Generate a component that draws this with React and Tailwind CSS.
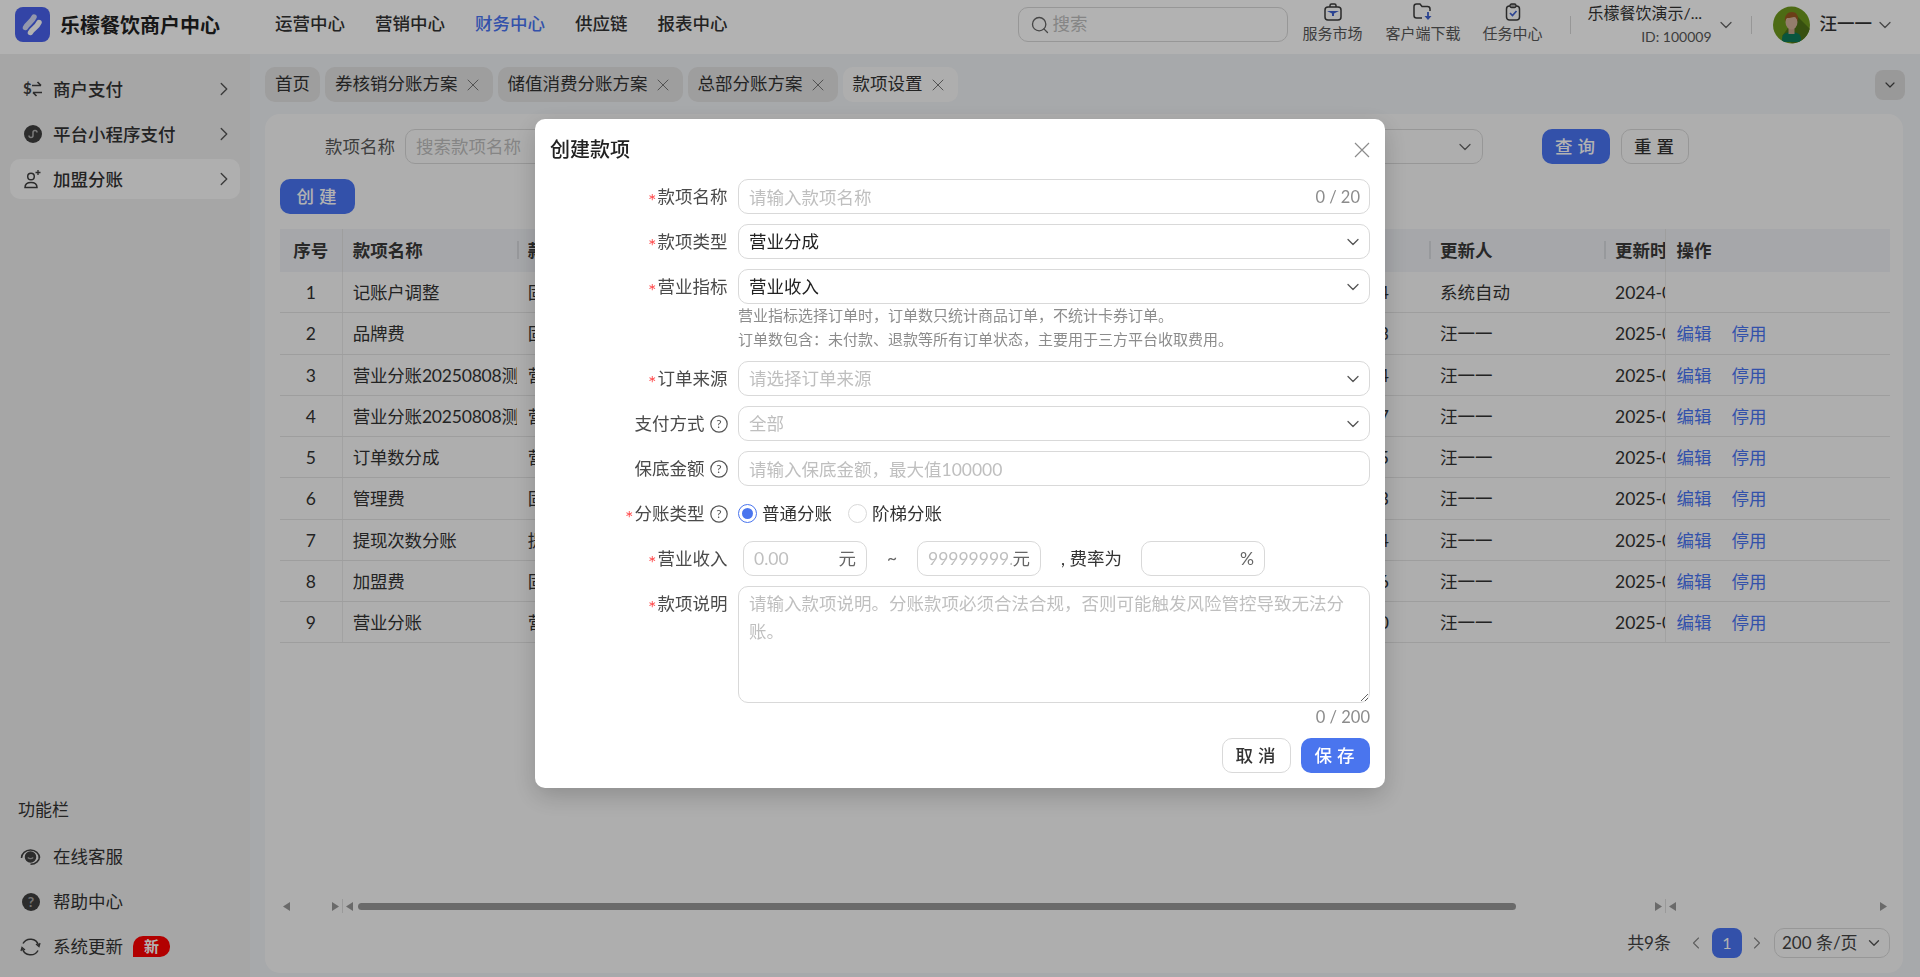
import { ChevronDown, ChevronRight, ChevronLeft, X, Search } from 'lucide-react';

const NAV = ['运营中心', '营销中心', '财务中心', '供应链', '报表中心'];
const TABS = ['券核销分账方案', '储值消费分账方案', '总部分账方案', '款项设置'];
const ROWS = [
  ['记账户调整', '固定金额', '2024-07-01 10:20:14', '系统自动', '2024-07-01 10:20:14', false],
  ['品牌费', '固定金额', '2025-06-12 14:10:03', '汪一一', '2025-06-12 14:10:03', true],
  ['营业分账20250808测试', '营业分成', '2025-08-08 11:02:14', '汪一一', '2025-08-08 11:02:14', true],
  ['营业分账20250808测试', '营业分成', '2025-08-08 11:01:07', '汪一一', '2025-08-08 11:01:07', true],
  ['订单数分成', '营业分成', '2025-07-21 16:32:45', '汪一一', '2025-07-21 16:32:45', true],
  ['管理费', '固定金额', '2025-07-21 16:31:13', '汪一一', '2025-07-21 16:31:13', true],
  ['提现次数分账', '提现分成', '2025-07-18 09:40:24', '汪一一', '2025-07-18 09:40:24', true],
  ['加盟费', '固定金额', '2025-07-18 09:38:16', '汪一一', '2025-07-18 09:38:16', true],
  ['营业分账', '营业分成', '2025-07-18 09:36:50', '汪一一', '2025-07-18 09:36:50', true],
];

function Logo() {
  return (
    <svg width="35" height="35" viewBox="0 0 35 35" fill="none" strokeLinecap="round">
      <rect width="35" height="35" rx="8" fill="#4a62ee" />
      <path d="M10.500 20.500C12 17 17 15 19 10" stroke="#d3d9f7" strokeWidth="5.500" />
      <path d="M15.500 25.500C17 22 22 20.500 24 15.500" stroke="#ffffff" strokeWidth="5.500" />
    </svg>
  );
}

function SwapIcon() {
  return (
    <svg width="20" height="18" viewBox="0 0 20 18" fill="none" stroke="#404040" strokeWidth="1.700">
      <text x="0" y="14" fontSize="15" fontWeight="700" fill="#404040" stroke="none" fontFamily="Lato">$</text>
      <path d="M9 5.500h9M14.500 2l3.500 3.500M19 12.500h-9M13.500 16L10 12.500" />
    </svg>
  );
}

function MiniIcon() {
  return (
    <svg width="18" height="18" viewBox="0 0 18 18" fill="none">
      <circle cx="9" cy="9" r="9" fill="#404040" />
      <path d="M5 10.500a2 2 0 1 0 4 0v-3a2 2 0 1 1 4 0" stroke="#b0b0b0" strokeWidth="1.500" />
    </svg>
  );
}

function UserPlusIcon() {
  return (
    <svg width="20" height="20" viewBox="0 0 20 20" fill="none" stroke="#404040" strokeWidth="1.500">
      <circle cx="8" cy="7.500" r="3.300" />
      <path d="M2 18.500c0-3.500 2.500-5 6-5s6 1.500 6 5z" />
      <path d="M15 1v5M12.500 3.500h5" strokeWidth="1.300" />
    </svg>
  );
}

function ServiceIcon() {
  return (
    <svg width="21" height="20" viewBox="0 0 21 20" fill="none" stroke="#404040" strokeWidth="1.500">
      <path d="M1.500 11a9 8 0 0 1 18 0" />
      <path d="M19.500 9.500c0 4-3.500 7.800-9 7.800" />
      <circle cx="10.500" cy="10" r="5" fill="#404040" />
      <path d="M7.800 10.500c1.500 1.500 4 1.500 5.400 0" stroke="#a5a5a5" strokeWidth="1.200" />
    </svg>
  );
}

function HelpIcon() {
  return (
    <svg width="18" height="18" viewBox="0 0 18 18">
      <circle cx="9" cy="9" r="9" fill="#404040" />
      <text x="9" y="14" fontSize="14" fontWeight="700" fill="#a5a5a5" textAnchor="middle" fontFamily="Lato">?</text>
    </svg>
  );
}

function RefreshIcon() {
  return (
    <svg width="21" height="20" viewBox="0 0 21 20" fill="none" stroke="#404040" strokeWidth="1.500">
      <path d="M3 6.500A8.500 8.500 0 0 1 18.500 8" />
      <path d="M18 13.500A8.500 8.500 0 0 1 2.500 12" />
      <path d="M16 7l3 2.500 1-3.500M5 13l-3-2.500L1 14" strokeWidth="1.300" />
    </svg>
  );
}

function BagIcon() {
  return (
    <svg width="20" height="18" viewBox="0 0 20 18" fill="none">
      <rect x="2" y="4" width="16" height="13" rx="3" stroke="#3d3d3d" strokeWidth="1.500" />
      <path d="M7 4V2.500Q7 1 8.500 1h3Q13 1 13 2.500V4" stroke="#3d3d3d" strokeWidth="1.500" />
      <path d="M4 8h12L11 10.500V13H9v-2.500z" fill="#3f62d0" />
    </svg>
  );
}

function FolderIcon() {
  return (
    <svg width="20" height="18" viewBox="0 0 20 18" fill="none">
      <path d="M9 15H3.500Q1 15 1 12.500V3.500Q1 1 3.500 1H7l2 2.500h5.500Q17 3.500 17 6v2" stroke="#3d3d3d" strokeWidth="1.500" />
      <path d="M15 9v5" stroke="#3f62d0" strokeWidth="1.800" />
      <path d="M11.500 13h7L15 17z" fill="#3f62d0" />
    </svg>
  );
}

function TaskIcon() {
  return (
    <svg width="20" height="18" viewBox="0 0 20 18" fill="none">
      <rect x="3.500" y="3" width="13" height="14" rx="3" stroke="#3d3d3d" strokeWidth="1.500" />
      <rect x="7" y="1" width="6" height="3.500" rx="1.500" fill="#b0b0b0" stroke="#3d3d3d" strokeWidth="1.300" />
      <path d="M7 10l2.500 2.500L13.500 8" stroke="#3f62d0" strokeWidth="1.700" />
    </svg>
  );
}

function Avatar() {
  return (
    <svg width="37" height="38" viewBox="0 0 37 38" className="shrink-0">
      <clipPath id="av"><circle cx="18.500" cy="19" r="18.500" /></clipPath>
      <circle cx="18.500" cy="19" r="18.500" fill="#6f9a1e" />
      <g clipPath="url(#av)">
        <path d="M24 10L38 24V38H20L9 30z" fill="#4f7318" />
        <path d="M9 33c0-5 4-7 9.500-7s9.500 2 9.500 7v3H9z" fill="#0f7a5a" />
        <rect x="15.500" y="20" width="6" height="8" fill="#c9a58c" />
        <ellipse cx="18.500" cy="16" rx="6" ry="7.500" fill="#d4b39b" />
        <path d="M12 16c-1-7 3-10 7-10 4 0 7 3 6 10-1-3-2-5-4-5-3 1-7 1-7 1-1 1-2 2-2 4z" fill="#9a5a22" />
      </g>
    </svg>
  );
}

function Help() {
  return (
    <svg width="18" height="18" viewBox="0 0 18 18" className="shrink-0">
      <circle cx="9" cy="9" r="8.200" fill="none" stroke="#555" strokeWidth="1.200" />
      <text x="9" y="13.200" fontSize="12" fill="#555" textAnchor="middle" fontFamily="Lato">?</text>
    </svg>
  );
}

function TopTool({ icon, label }) {
  return (
    <div className="flex flex-col items-center pt-[3px] text-[15px] leading-[22px] text-[#595959]">
      <div className="h-[18px]">{icon}</div>
      <span className="mt-px">{label}</span>
    </div>
  );
}

function Header() {
  return (
    <header className="h-[54px] shrink-0 bg-white flex items-center pb-[5px] text-[#333]">
      <div className="ml-[15px]"><Logo /></div>
      <div className="ml-[10px] w-[215px] text-[20px] font-bold text-[#222]">乐檬餐饮商户中心</div>
      <nav className="flex gap-[30px] text-[17.5px] font-medium">
        {NAV.map((n) => (
          <span key={n} className={n === '财务中心' ? 'text-[#4975f4]' : 'text-[#333]'}>{n}</span>
        ))}
      </nav>
      <div className="ml-[290px] w-[270px] h-[35px] border border-[#d9d9d9] rounded-[10px] flex items-center pl-[11px] text-[17.5px] text-[#bfbfbf]">
        <Search size={20} strokeWidth={1.600} className="text-[#666]" />
        <span className="ml-[3px]">搜索</span>
      </div>
      <div className="ml-[15px] w-[60px] flex justify-center self-start"><TopTool icon={<BagIcon />} label="服务市场" /></div>
      <div className="ml-[23px] w-[75px] flex justify-center self-start"><TopTool icon={<FolderIcon />} label="客户端下载" /></div>
      <div className="ml-[22px] w-[60px] flex justify-center self-start"><TopTool icon={<TaskIcon />} label="任务中心" /></div>
      <div className="ml-[27px] w-px h-[18px] bg-[#d9d9d9]" />
      <div className="ml-[17px] w-[124px] flex flex-col text-[14px] leading-[24px] text-[#595959]">
        <span className="whitespace-nowrap text-[16px] text-[#333]">乐檬餐饮演示/...</span>
        <span className="text-right">ID: 100009</span>
      </div>
      <ChevronDown size={20} strokeWidth={1.500} className="ml-[4px] text-[#666]" />
      <div className="ml-[15px] w-px h-[18px] bg-[#d9d9d9]" />
      <div className="ml-[21px]"><Avatar /></div>
      <span className="ml-[10px] text-[17.5px] font-medium text-[#333]">汪一一</span>
      <ChevronDown size={20} strokeWidth={1.500} className="ml-[3px] text-[#666]" />
    </header>
  );
}

function SideItem({ icon, label, active }) {
  return (
    <div className={`h-[40px] rounded-[10px] pl-[12px] pr-[5px] flex items-center text-[17.5px] font-medium text-[#333] ${active ? 'bg-[#fbfbfb]' : ''}`}>
      <span className="w-[21px] flex justify-center">{icon}</span>
      <span className="ml-[10px] flex-1 pt-[2px]">{label}</span>
      <ChevronRight size={22} strokeWidth={1.500} className="text-[#555]" />
    </div>
  );
}

function FootItem({ icon, label, children }) {
  return (
    <div className="h-[45px] pl-[20px] flex items-center text-[17.5px] text-[#333]">
      <span className="w-[21px] flex justify-center">{icon}</span>
      <span className="ml-[12px] pt-[2px]">{label}</span>
      {children}
    </div>
  );
}

function Sidebar() {
  return (
    <aside className="w-[250px] shrink-0 bg-[#eeeeee] flex flex-col justify-between">
      <div className="pt-[15px] px-[10px] flex flex-col gap-[5px]">
        <SideItem icon={<SwapIcon />} label="商户支付" />
        <SideItem icon={<MiniIcon />} label="平台小程序支付" />
        <SideItem icon={<UserPlusIcon />} label="加盟分账" active />
      </div>
      <div className="pb-[8px]">
        <div className="pl-[18px] mb-[12px] text-[17px] text-[#333]">功能栏</div>
        <FootItem icon={<ServiceIcon />} label="在线客服" />
        <FootItem icon={<HelpIcon />} label="帮助中心" />
        <FootItem icon={<RefreshIcon />} label="系统更新">
          <span className="ml-[10px] w-[37px] h-[21px] bg-[#ff0000] text-white text-[15px] font-bold leading-[21px] text-center rounded-t-[10px] rounded-br-[10px]">新</span>
        </FootItem>
      </div>
    </aside>
  );
}

function Tabs() {
  return (
    <div className="mt-[13px] mr-[15px] flex items-center justify-between">
      <div className="flex gap-[5px] text-[17.5px] text-[#333]">
        <div className="h-[35px] px-[10px] rounded-[10px] bg-[#e2e2e2] flex items-center">首页</div>
        {TABS.map((t) => (
          <div key={t} className={`h-[35px] pl-[10px] pr-[10px] rounded-[10px] flex items-center ${t === '款项设置' ? 'bg-[#fafafa]' : 'bg-[#e2e2e2]'}`}>
            {t}
            <X size={20} strokeWidth={1.200} className="ml-[5px] text-[#777]" />
          </div>
        ))}
      </div>
      <div className="w-[30px] h-[30px] rounded-[8px] bg-[#dcdcdc] flex items-center justify-center">
        <ChevronDown size={16} strokeWidth={1.800} className="text-[#444]" />
      </div>
    </div>
  );
}

const GRID = 'grid grid-cols-[62.700px_174px_912.300px_175px_61.500px_224.500px]';

function ResizeBar() {
  return <span className="absolute left-0 top-[12px] h-[18px] w-[2px] bg-[#d9dbe0]" />;
}

function Table() {
  return (
    <div className="mt-[15px] text-[17.5px] text-[#333]">
      <div className={`${GRID} h-[43px] bg-[#eef0f4] font-bold items-center text-[#3a3a3a]`}>
        <div className="h-full pt-[2px] flex items-center justify-center border-r border-[#e3e3e3]">序号</div>
        <div className="pl-[10px] pt-[2px]">款项名称</div>
        <div className="relative h-full flex items-center pl-[11px] pt-[2px]"><ResizeBar />款项类型</div>
        <div className="relative h-full flex items-center pl-[11px] pt-[2px]"><ResizeBar />更新人</div>
        <div className="relative h-full flex items-center pl-[11px] pt-[2px] overflow-hidden whitespace-nowrap"><ResizeBar />更新时间</div>
        <div className="h-full flex items-center pl-[10px] pt-[2px] border-l border-[#e3e3e3]">操作</div>
      </div>
      {ROWS.map((r, i) => (
        <div key={i} className={`${GRID} h-[41.250px] border-b border-[#e3e3e3] items-center`}>
          <div className="h-full pt-[2px] flex items-center justify-center border-r border-[#e8e8e8]">{i + 1}</div>
          <div className="pl-[10px] pt-[2px] tracking-[-0.2px] whitespace-nowrap overflow-hidden">{r[0]}</div>
          <div className="pl-[11px] pt-[2px] pr-[40px] flex justify-between whitespace-nowrap overflow-hidden">
            <span>{r[1]}</span>
            <span>{r[2]}</span>
          </div>
          <div className="pl-[11px] pt-[2px]">{r[3]}</div>
          <div className="pl-[11px] pt-[2px] whitespace-nowrap overflow-hidden">{r[4]}</div>
          <div className="h-full flex items-center pl-[10px] pt-[2px] gap-[20px] border-l border-[#e8e8e8] text-[#4975f4]">
            {r[5] && <span>编辑</span>}
            {r[5] && <span>停用</span>}
          </div>
        </div>
      ))}
    </div>
  );
}

function Arrow({ dir }) {
  return (
    <svg width="7" height="9" viewBox="0 0 7 9" className="shrink-0">
      <path d={dir === 'l' ? 'M7 0v9L0 4.500z' : 'M0 0v9l7-4.500z'} fill="#999" />
    </svg>
  );
}

function ScrollBars() {
  return (
    <div className="mt-auto h-[14px] flex items-center">
      <div className="w-[62px] h-full flex items-center justify-between px-[3px]">
        <Arrow dir="l" /><Arrow dir="r" />
      </div>
      <div className="w-px h-full bg-[#dddddd]" />
      <div className="flex-1 h-full flex items-center px-[3px]">
        <Arrow dir="l" />
        <div className="ml-[5px] w-[1158px] h-[7px] rounded-full bg-[#999999]" />
        <div className="flex-1" />
        <Arrow dir="r" />
      </div>
      <div className="w-px h-full bg-[#dddddd]" />
      <div className="w-[224px] h-full flex items-center justify-between px-[3px]">
        <Arrow dir="l" /><Arrow dir="r" />
      </div>
    </div>
  );
}

function Pager() {
  return (
    <div className="mt-[15px] h-[30px] flex items-center justify-end text-[17px] text-[#444]">
      <span>共9条</span>
      <ChevronLeft size={20} strokeWidth={1.300} className="ml-[15px] text-[#888]" />
      <span className="ml-[6px] w-[30px] h-[30px] rounded-[8px] bg-[#4975f4] text-white flex items-center justify-center text-[16px]">1</span>
      <ChevronRight size={20} strokeWidth={1.300} className="ml-[5px] text-[#888]" />
      <div className="ml-[7px] w-[116px] h-[30px] rounded-[10px] border border-[#d9d9d9] pl-[7px] flex items-center">
        200 条/页
        <ChevronDown size={18} strokeWidth={1.800} className="ml-auto mr-[6px] text-[#555]" />
      </div>
    </div>
  );
}

function MainCard() {
  return (
    <div className="mt-[12px] mr-[17px] mb-[4px] flex-1 rounded-[15px] bg-[#fafafa] pt-[15px] pb-[15px] pl-[15px] pr-[13px] flex flex-col">
      <div className="flex items-center h-[35px] pl-[45px] text-[17.5px] text-[#595959]">
        <span className="pt-[2px]">款项名称</span>
        <div className="ml-[10px] w-[400px] h-[35px] rounded-[10px] border border-[#d9d9d9] pl-[10px] pt-[2px] flex items-center text-[#bfbfbf]">搜索款项名称</div>
        <div className="ml-[278px] w-[400px] h-[35px] rounded-[10px] border border-[#d9d9d9] flex items-center justify-end pr-[7px]">
          <ChevronDown size={20} strokeWidth={1.500} className="text-[#666]" />
        </div>
        <button className="ml-[59px] w-[68px] h-[35px] pl-[3px] pt-[2px] rounded-[10px] bg-[#4975f4] font-medium text-white tracking-[5px]">查询</button>
        <button className="ml-[11px] w-[68px] h-[35px] pl-[3px] pt-[2px] rounded-[10px] border border-[#d9d9d9] font-medium text-[#333] tracking-[5px]">重置</button>
      </div>
      <button className="mt-[15px] w-[75px] h-[35px] pl-[3px] pt-[2px] rounded-[10px] bg-[#4975f4] text-white text-[17.5px] tracking-[5px] font-medium">创建</button>
      <Table />
      <ScrollBars />
      <Pager />
    </div>
  );
}

function Label({ star, help, children }) {
  return (
    <div className="w-[192.500px] shrink-0 pt-[2px] flex items-center justify-end text-[17.5px] text-[#4a4a4a]">
      {star && <span className="text-[#ff4d4f] text-[20px] leading-none mr-px translate-y-[2px]">*</span>}
      <span>{children}</span>
      {help && <span className="ml-[5px] -translate-y-[1px]"><Help /></span>}
    </div>
  );
}

function Field({ label, star, help, children, className = 'mb-[10px]' }) {
  return (
    <div className={`flex items-start ${className}`}>
      <div className="h-[35px] flex items-center"><Label star={star} help={help}>{label}</Label></div>
      <div className="ml-[10.500px] flex-1">{children}</div>
    </div>
  );
}

const INPUT = 'w-full h-[35px] rounded-[10px] border border-[#d9d9d9] px-[10px] pt-[2px] text-[17.5px] outline-none placeholder:text-[#bfbfbf]';

function Select({ value, placeholder }) {
  return (
    <div className="h-[35px] rounded-[10px] border border-[#d9d9d9] pl-[10px] pr-[6px] flex items-center justify-between text-[17.5px]">
      <span className={`pt-[2px] ${value ? 'text-[#222]' : 'text-[#bfbfbf]'}`}>{value || placeholder}</span>
      <ChevronDown size={20} strokeWidth={1.500} className="text-[#555]" />
    </div>
  );
}

function Radio({ checked, label }) {
  return (
    <div className="flex items-center text-[17.5px] text-[#333]">
      <span className={`w-[19px] h-[19px] rounded-full border flex items-center justify-center ${checked ? 'border-[#4a75ee]' : 'border-[#d9d9d9]'}`}>
        {checked && <span className="w-[11px] h-[11px] rounded-full bg-[#4a75ee]" />}
      </span>
      <span className="ml-[5px] pt-[2px]">{label}</span>
    </div>
  );
}

function Affix({ placeholder, suffix }) {
  return (
    <div className="w-[124px] h-[35px] pt-[2px] rounded-[10px] border border-[#d9d9d9] px-[10px] flex items-center justify-between text-[17.5px]">
      <span className="text-[#bfbfbf] overflow-hidden whitespace-nowrap">{placeholder}</span>
      <span className="shrink-0 text-[#666] ml-[1px]">{suffix}</span>
    </div>
  );
}

function Modal() {
  return (
    <div className="fixed inset-0 bg-black/30 flex justify-center pt-[119px]">
      <div className="relative w-[850px] h-[669px] rounded-[10px] bg-white pr-[15px] shadow-[0_8px_24px_rgba(0,0,0,0.2)]">
        <div className="h-[60px] pl-[15px] flex items-center text-[20px] font-medium text-[#222]">创建款项</div>
        <svg width="16" height="16" viewBox="0 0 16 16" className="absolute top-[23px] right-[15px]" fill="none" stroke="#8c8c8c" strokeWidth="1.200">
          <path d="M1 1l14 14M15 1L1 15" />
        </svg>
        <Field label="款项名称" star>
          <div className="relative">
            <input readOnly placeholder="请输入款项名称" className={INPUT} />
            <span className="absolute right-[10px] top-[6px] text-[16.500px] text-[#8c8c8c]">0 / 20</span>
          </div>
        </Field>
        <Field label="款项类型" star><Select value="营业分成" /></Field>
        <Field label="营业指标" star className="">
          <Select value="营业收入" />
          <div className="-mt-[1px] text-[15px] leading-[24px] text-[#8c8c8c] mb-[10px] whitespace-nowrap">
            <div>营业指标选择订单时，订单数只统计商品订单，不统计卡券订单。</div>
            <div>订单数包含：未付款、退款等所有订单状态，主要用于三方平台收取费用。</div>
          </div>
        </Field>
        <Field label="订单来源" star><Select placeholder="请选择订单来源" /></Field>
        <Field label="支付方式" help><Select placeholder="全部" /></Field>
        <Field label="保底金额" help><input readOnly placeholder="请输入保底金额，最大值100000" className={INPUT} /></Field>
        <Field label="分账类型" star help>
          <div className="h-[35px] flex items-center gap-[16px]">
            <Radio checked label="普通分账" />
            <Radio label="阶梯分账" />
          </div>
        </Field>
        <Field label="营业收入" star>
          <div className="pl-[5px] flex items-center text-[17.5px] text-[#333]">
            <Affix placeholder="0.00" suffix="元" />
            <span className="w-[50px] text-center text-[#666]">~</span>
            <Affix placeholder="99999999." suffix="元" />
            <span className="ml-[20px] w-[80px] pt-[2px] whitespace-nowrap">, 费率为</span>
            <Affix placeholder="" suffix="%" />
          </div>
        </Field>
        <Field label="款项说明" star className="">
          <textarea
            readOnly
            placeholder="请输入款项说明。分账款项必须合法合规，否则可能触发风险管控导致无法分账。"
            className="block w-full h-[117px] rounded-[10px] border border-[#d9d9d9] px-[10px] py-[3px] text-[17.5px] leading-[27.500px] outline-none placeholder:text-[#bfbfbf]"
          />
          <div className="h-[35px] pt-[1px] text-right text-[16.500px] leading-[27px] text-[#8c8c8c]">0 / 200</div>
        </Field>
        <div className="flex justify-end gap-[10px]">
          <button className="w-[69px] h-[35px] pl-[3px] pt-[2px] rounded-[10px] border border-[#d9d9d9] text-[17.5px] font-medium text-[#333] tracking-[5px]">取消</button>
          <button className="w-[69px] h-[35px] pl-[3px] pt-[2px] rounded-[10px] bg-[#4a75ee] text-[17.5px] font-medium text-white tracking-[5px]">保存</button>
        </div>
      </div>
    </div>
  );
}

export default function App() {
  return (
    <div className="h-screen flex flex-col overflow-hidden bg-[#f0f2f5] font-['Lato','Noto_Sans_CJK_SC',sans-serif]">
      <Header />
      <div className="flex-1 flex min-h-0">
        <Sidebar />
        <main className="flex-1 min-w-0 pl-[15px] flex flex-col">
          <Tabs />
          <MainCard />
        </main>
      </div>
      <Modal />
    </div>
  );
}
